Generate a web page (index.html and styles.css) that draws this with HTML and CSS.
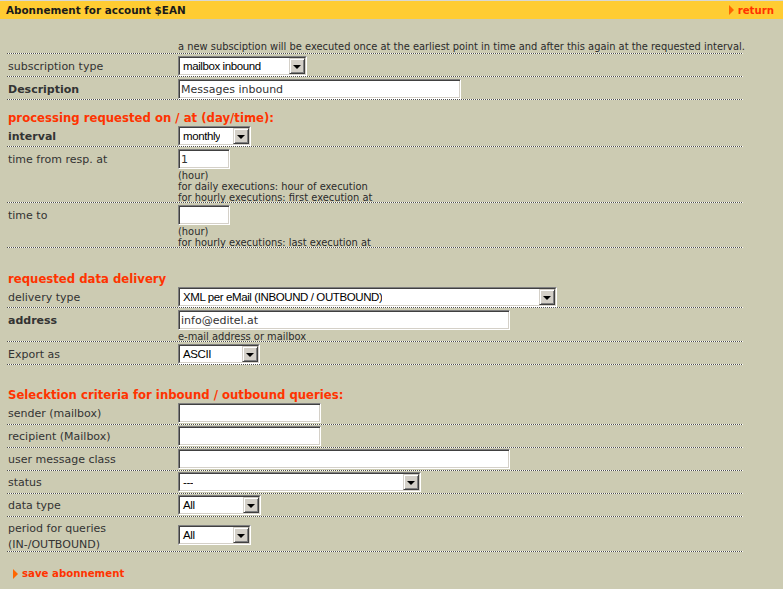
FILE: index.html
```html
<!DOCTYPE html>
<html>
<head>
<meta charset="utf-8">
<title>Abonnement</title>
<link rel="stylesheet" href="styles.css">
</head>
<body>
<div class="header">
  <span class="title">Abonnement for account $EAN</span>
  <a class="link" href="#"><span class="arrow"></span>return</a>
</div>
<div class="form">
  <div class="row info">
    <div class="label"></div>
    <div class="field note">a new subsciption will be executed once at the earliest point in time and after this again at the requested interval.</div>
  </div>
  <div class="row">
    <div class="label">subscription type</div>
    <div class="field"><div class="sel w129"><div class="sel-in"><span class="val">mailbox inbound</span><span class="btn"><span class="tri"></span></span></div></div></div>
  </div>
  <div class="row">
    <div class="label b">Description</div>
    <div class="field"><input class="txt w283" type="text" value="Messages inbound"></div>
  </div>
  <div class="heading h1">processing requested on / at (day/time):</div>
  <div class="row t1">
    <div class="label b">interval</div>
    <div class="field"><div class="sel w73"><div class="sel-in"><span class="val">monthly</span><span class="btn"><span class="tri"></span></span></div></div></div>
  </div>
  <div class="row">
    <div class="label">time from resp. at</div>
    <div class="field">
      <input class="txt w52" type="text" value="1">
      <div class="help">(hour)<br>for daily executions: hour of execution<br>for hourly executions: first execution at</div>
    </div>
  </div>
  <div class="row">
    <div class="label">time to</div>
    <div class="field">
      <input class="txt w52" type="text" value="">
      <div class="help">(hour)<br>for hourly executions: last execution at</div>
    </div>
  </div>
  <div class="heading h2">requested data delivery</div>
  <div class="row t0">
    <div class="label">delivery type</div>
    <div class="field"><div class="sel w379"><div class="sel-in"><span class="val">XML per eMail (INBOUND / OUTBOUND)</span><span class="btn"><span class="tri"></span></span></div></div></div>
  </div>
  <div class="row">
    <div class="label b">address</div>
    <div class="field">
      <input class="txt w332" type="text" value="info@editel.at">
      <div class="help">e-mail address or mailbox</div>
    </div>
  </div>
  <div class="row">
    <div class="label">Export as</div>
    <div class="field"><div class="sel w82"><div class="sel-in"><span class="val">ASCII</span><span class="btn"><span class="tri"></span></span></div></div></div>
  </div>
  <div class="heading h3">Selecktion criteria for inbound / outbound queries:</div>
  <div class="row t1b2">
    <div class="label">sender (mailbox)</div>
    <div class="field"><input class="txt w143" type="text" value=""></div>
  </div>
  <div class="row t1b2">
    <div class="label">recipient (Mailbox)</div>
    <div class="field"><input class="txt w143" type="text" value=""></div>
  </div>
  <div class="row t1b2">
    <div class="label">user message class</div>
    <div class="field"><input class="txt w332" type="text" value=""></div>
  </div>
  <div class="row t1b2">
    <div class="label">status</div>
    <div class="field"><div class="sel w243"><div class="sel-in"><span class="val">---</span><span class="btn"><span class="tri"></span></span></div></div></div>
  </div>
  <div class="row t1b2">
    <div class="label">data type</div>
    <div class="field"><div class="sel w83"><div class="sel-in"><span class="val">All</span><span class="btn"><span class="tri"></span></span></div></div></div>
  </div>
  <div class="row period">
    <div class="label two">period for queries<br>(IN-/OUTBOUND)</div>
    <div class="field"><div class="sel w73 down"><div class="sel-in"><span class="val">All</span><span class="btn"><span class="tri"></span></span></div></div></div>
  </div>
  <div class="save"><a class="link" href="#"><span class="arrow"></span>save abonnement</a></div>
</div>
</body>
</html>
```

FILE: styles.css
```css
html, body {
  margin: 0;
  padding: 0;
  background: #cccbb2;
}
body {
  font-family: "DejaVu Sans", Verdana, sans-serif;
  color: #333333;
  font-size: 10px;
}
.header {
  border-top: 1px solid #d8d8d4;
  background: #ffcc33;
  height: 18px;
  display: flex;
  align-items: center;
  justify-content: space-between;
  padding: 0 9px 0 6px;
}
.title {
  font-weight: bold;
  font-size: 10.4px;
  color: #1a1a1a;
}
.link {
  display: flex;
  align-items: center;
  color: #ff3300;
  font-weight: bold;
  font-size: 10.2px;
  text-decoration: none;
}
.arrow {
  width: 0;
  height: 0;
  border-top: 5px solid transparent;
  border-bottom: 5px solid transparent;
  border-left: 5px solid #ff6600;
  margin-right: 4px;
}
.form {
  margin-left: 7px;
  width: 736px;
}
.row {
  display: flex;
  align-items: flex-start;
  padding: 2px 0 1px;
  background-image: linear-gradient(to right, #4d4d4d 50%, #ffffff 50%);
  background-size: 2px 1px;
  background-repeat: repeat-x;
  background-position: left bottom;
}
.row.t1 { padding-top: 1px; }
.row.t0 { padding-top: 0; }
.row.t1b2 { padding: 1px 0 2px; }
.row.period { padding: 2px 0 1px; }
.row.info { padding: 22px 0 1px; }
.label {
  width: 171px;
  flex: none;
  box-sizing: border-box;
  padding-left: 1px;
  padding-top: 4px;
  line-height: 14px;
  font-size: 11px;
  color: #333333;
}
.label.b { font-weight: bold; }
.label.two { padding-top: 2px; margin-bottom: -2px; line-height: 16px; }
.field {
  display: flex;
  flex-direction: column;
  align-items: flex-start;
}
.note {
  font-size: 9.9px;
  line-height: 12px;
  color: #2a2a2a;
  white-space: nowrap;
}
.help {
  font-size: 9.9px;
  line-height: 11px;
  padding-top: 1px;
  margin-bottom: -1px;
  color: #2a2a2a;
  white-space: nowrap;
}
.heading {
  color: #ff3300;
  font-weight: bold;
  font-size: 11.7px;
  line-height: 14px;
  padding-left: 1px;
}
.heading.h1 { padding-top: 11px; padding-bottom: 0; }
.heading.h2 { padding-top: 24px; padding-bottom: 1px; }
.heading.h3 { padding-top: 23px; padding-bottom: 0; }
.txt {
  height: 20px;
  box-sizing: border-box;
  margin: 0;
  padding: 0 2px;
  border: 1px solid;
  border-color: #808080 #ffffff #ffffff #808080;
  box-shadow: inset 1px 1px #404040, inset -1px -1px #d4d0c8;
  background: #ffffff;
  font-family: "DejaVu Sans", Verdana, sans-serif;
  font-size: 11px;
  color: #333333;
  outline: none;
}
.sel {
  height: 20px;
  box-sizing: border-box;
  border: 1px solid;
  border-color: #808080 #ffffff #ffffff #808080;
  background: #ffffff;
}
.sel.down { margin-top: 6px; }
.sel-in {
  height: 100%;
  box-sizing: border-box;
  border: 1px solid;
  border-color: #404040 #d4d0c8 #d4d0c8 #404040;
  display: flex;
  align-items: center;
  justify-content: space-between;
}
.val {
  padding-left: 3px;
  font-family: "Liberation Sans", Arial, sans-serif;
  font-size: 11.5px;
  letter-spacing: -0.4px;
  color: #000000;
  white-space: nowrap;
  overflow: hidden;
}
.btn {
  flex: none;
  width: 16px;
  height: 16px;
  box-sizing: border-box;
  background: #d4d0c8;
  border: 1px solid;
  border-color: #d4d0c8 #404040 #404040 #d4d0c8;
  box-shadow: inset 1px 1px #ffffff, inset -1px -1px #808080;
  display: flex;
  align-items: center;
  justify-content: center;
}
.tri {
  width: 0;
  height: 0;
  border-left: 4px solid transparent;
  border-right: 4px solid transparent;
  border-top: 4px solid #000000;
  margin-top: 1px;
}
.w52 { width: 52px; }
.w73 { width: 73px; }
.w82 { width: 82px; }
.w83 { width: 83px; }
.w129 { width: 129px; }
.w143 { width: 143px; }
.w243 { width: 243px; }
.w283 { width: 283px; }
.w332 { width: 332px; }
.w379 { width: 379px; }
.save {
  padding: 15px 0 0 6px;
  line-height: 14px;
}
```
